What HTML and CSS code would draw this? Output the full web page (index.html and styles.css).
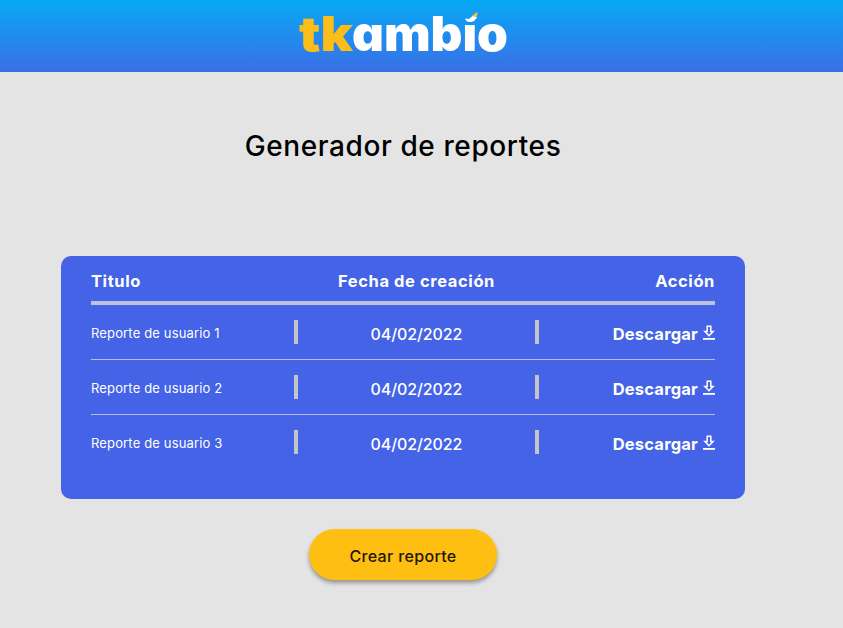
FILE: index.html
```html
<!DOCTYPE html>
<html lang="es">
<head>
<meta charset="utf-8">
<title>Generador de reportes</title>
<link rel="stylesheet" href="styles.css">
</head>
<body>
<svg class="symbols" width="0" height="0" aria-hidden="true">
  <symbol id="download" viewBox="0 0 12 16">
    <path d="M4.2 1.2h3.6v5.3h2.3L6 10.7 1.9 6.5h2.3z" fill="none" stroke="#fff" stroke-width="1.5"/>
    <path d="M0 13h12v1.8H0z" fill="#fff"/>
  </symbol>
</svg>
<header class="topbar">
  <svg class="logo" width="230" height="72" viewBox="288 0 230 72">
    <text class="logo-tk" x="299" y="51" textLength="54" lengthAdjust="spacingAndGlyphs">tk</text>
    <text class="logo-rest" x="352" y="51" textLength="156" lengthAdjust="spacingAndGlyphs">ambıo</text>
    <path d="M465 18.500l4 .5 4-3.500 4 1.500c-1 3-4 5-7 5-3 0-4-1-5-3.500z" fill="#fff"/>
    <path d="M472 16c2-1 3-3 5-4 1 2 0 4-1 5z" fill="#fdbf2d"/>
  </svg>
</header>
<main class="page">
  <h1 class="title">Generador de reportes</h1>
  <section class="panel">
    <div class="grid head">
      <span class="h1c">Titulo</span><span class="h2c">Fecha de creación</span><span class="h3c">Acción</span>
    </div>
    <div class="grid row">
      <span class="name">Reporte de usuario 1</span><span class="date">04/02/2022</span>
      <a class="action"><span class="dl">Descargar</span><svg class="icon"><use href="#download"/></svg></a>
    </div>
    <div class="grid row">
      <span class="name">Reporte de usuario 2</span><span class="date">04/02/2022</span>
      <a class="action"><span class="dl">Descargar</span><svg class="icon"><use href="#download"/></svg></a>
    </div>
    <div class="grid row">
      <span class="name">Reporte de usuario 3</span><span class="date">04/02/2022</span>
      <a class="action"><span class="dl">Descargar</span><svg class="icon"><use href="#download"/></svg></a>
    </div>
  </section>
  <button class="create">Crear reporte</button>
</main>
</body>
</html>
```

FILE: styles.css
```css
* { box-sizing: border-box; }
body { margin: 0; height: 628px; overflow: hidden; background: #e4e4e4; font-family: Inter, "Open Sans", sans-serif; }
.symbols { display: none; }
.topbar { height: 72px; padding-left: 288px; background: linear-gradient(#07a9f4, #3a6fe6); }
.logo { display: block; overflow: visible; }
.logo text { font-family: Inter, sans-serif; font-weight: 900; font-size: 48px; font-feature-settings: "cv11"; }
.logo-tk { fill: #fdbd18; }
.logo-rest { fill: #fff; }
.page { width: 806px; display: flex; flex-direction: column; align-items: center; }
.title { margin: 56px 0 0; height: 128px; font-size: 28px; line-height: 36px; font-weight: 500; letter-spacing: 0.6px; color: #000; white-space: nowrap; }
.panel { width: 684px; height: 243px; padding: 0 30px; border-radius: 10px; background: #4463e6; color: #fff; }
.grid { display: grid; grid-template-columns: 203px 245px 176px; align-items: center; white-space: nowrap; }
.head { height: 49px; padding-top: 5px; border-bottom: 4px solid #b9c3dc; font-size: 16.5px; font-weight: 700; letter-spacing: 0.6px; }
.h2c { text-align: center; }
.h3c { text-align: right; }
.row { height: 55px; border-bottom: 1px solid #b3c0ec; }
.row:last-child { border-bottom-color: transparent; }
.name { font-size: 13px; padding-top: 2px; letter-spacing: 0.15px; }
.date { display: flex; align-items: center; justify-content: center; height: 24px; border: solid #c4c4cb; border-width: 0 4px; font-size: 16px; font-weight: 500; padding-top: 4px; letter-spacing: -0.1px; }
.action { display: flex; justify-content: flex-end; align-items: center; font-size: 16.5px; font-weight: 700; letter-spacing: 0.2px; }
.dl { padding-top: 4px; }
.icon { width: 12px; height: 16px; margin: 1px 0 0 5px; }
.create { margin-top: 30px; width: 188px; height: 51px; padding: 2px 0 0; border: 0; border-radius: 26px; background: #ffbf12; box-shadow: 0 3px 4px rgba(0,0,0,.35); font: 500 16px Inter, sans-serif; letter-spacing: 0.35px; color: #211805; }
```
